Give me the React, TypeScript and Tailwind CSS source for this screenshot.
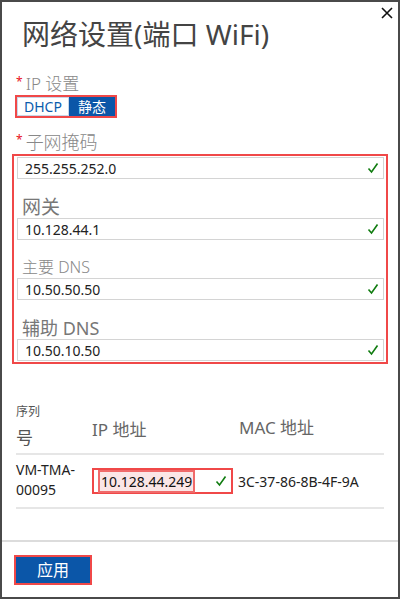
import React from "react"

const font = { fontFamily: '"Segoe UI", "Noto Sans", "Noto Sans CJK SC", sans-serif' }

function Check() {
    return (
        <svg width="12" height="12" viewBox="0 0 12 12" className="shrink-0">
            <path d="M1.5 6.5 L4.5 10 L10.5 1.5" fill="none" stroke="#107c10" strokeWidth="1.6" />
        </svg>
    )
}

function Field({ value }: { value: string }) {
    return (
        <div className="flex items-center h-[22px] border border-[#d4d4d4] pl-[7px] pr-[4px] text-[14px] text-[#222] bg-white">
            <span className="flex-1">{value}</span>
            <Check />
        </div>
    )
}

export default function App() {
    return (
        <div style={font} className="w-[400px] h-[599px] border-2 border-[#4a4a4a] bg-white flex flex-col relative overflow-hidden">
            <button className="absolute top-[4px] right-[4px] w-[14px] h-[14px] flex items-center justify-center">
                <svg width="12" height="12" viewBox="0 0 12 12">
                    <path d="M1 1 L11 11 M11 1 L1 11" stroke="#111" strokeWidth="1.6" />
                </svg>
            </button>

            <div className="flex-1 px-[10px]">
                <div className="mt-[12px] ml-[10px] h-[40px] leading-[40px] text-[28px] text-[#444]">网络设置(端口 WiFi)</div>

                <div className="mt-[20px] flex items-center h-[20px] leading-[20px] ml-[4px]">
                    <span className="text-[#e81123] text-[12px] self-start -mt-[2px] mr-[3px]">*</span>
                    <span className="text-[17px] text-[#888] font-light">IP 设置</span>
                </div>
                <div className="mt-[1px] ml-[3px] inline-flex border-2 border-[#f04848] h-[23px]">
                    <div className="px-[6px] flex items-center text-[14px] text-[#0b5cad] bg-white border border-[#c8d7e8]">DHCP</div>
                    <div className="px-[9px] flex items-center text-[14px] text-white bg-[#0b56a8]">静态</div>
                </div>

                <div className="mt-[14px] flex items-center h-[20px] leading-[20px] ml-[4px]">
                    <span className="text-[#e81123] text-[12px] self-start -mt-[2px] mr-[3px]">*</span>
                    <span className="text-[18px] text-[#888] font-light">子网掩码</span>
                </div>
                <div className="mt-[2px] border-2 border-[#f04848] pt-[1px] pb-[1px] pl-[3px] pr-[2px]">
                    <Field value="255.255.252.0" />
                    <div className="mt-[17px] h-[22px] leading-[22px] ml-[5px] text-[19px] text-[#777]">网关</div>
                    <Field value="10.128.44.1" />
                    <div className="mt-[16px] h-[22px] leading-[22px] ml-[5px] text-[16px] text-[#888] font-light">主要 DNS</div>
                    <Field value="10.50.50.50" />
                    <div className="mt-[17px] h-[22px] leading-[22px] ml-[5px] text-[18px] text-[#777]">辅助 DNS</div>
                    <Field value="10.50.10.50" />
                </div>

                <div className="mt-[40px] mx-[4px] flex items-end border-b-2 border-[#e6e6e6] pb-[2px]">
                    <div className="w-[76px] text-[#555]">
                        <div className="text-[12px] leading-[16px]">序列</div>
                        <div className="text-[17px] leading-[26px] mt-[5px]">号</div>
                    </div>
                    <div className="w-[147px] text-[17px] text-[#666] pb-[9px]">IP 地址</div>
                    <div className="flex-1 text-[17px] text-[#666] pb-[11px]">MAC 地址</div>
                </div>
                <div className="mx-[4px] flex items-center h-[54px] border-b-2 border-[#e6e6e6]">
                    <div className="w-[76px] text-[14px] leading-[20px] text-[#222] -mt-[2px]">
                        <div>VM-TMA-</div>
                        <div>00095</div>
                    </div>
                    <div className="w-[141px] h-[26px] border-2 border-[#f04848] flex items-center pl-[6px] pr-[4px]">
                        <span className="text-[14px] text-[#111] bg-[#fbe6e6] outline-2 outline-[#f06a6a] px-[1px] leading-[19px]">10.128.44.249</span>
                        <span className="flex-1" />
                        <Check />
                    </div>
                    <div className="ml-[5px] text-[14px] text-[#222]">3C-37-86-8B-4F-9A</div>
                </div>
            </div>

            <div className="border-t-2 border-[#dcdcdc] h-[57px] px-[12px] pt-[13px]">
                <button className="w-[78px] h-[30px] border-2 border-[#f04848] bg-[#0b56a8] text-white text-[16px] flex items-center justify-center">应用</button>
            </div>
        </div>
    )
}
